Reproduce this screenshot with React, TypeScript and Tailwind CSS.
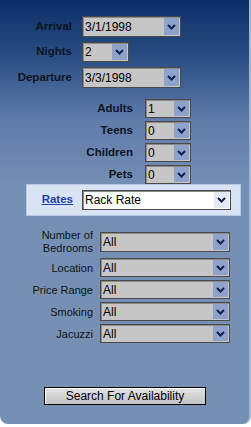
const Chevron = () => (
  <svg width="9" height="6" viewBox="0 0 9 6">
    <path d="M1 1 L4.5 4.5 L8 1" fill="none" stroke="#0f2250" strokeWidth="2" />
  </svg>
)

type DropProps = { value: string; w: string; h?: string; white?: boolean }

const Drop = ({ value, w, h = "h-[19px]", white }: DropProps) => {
  return (
    <div
      className={`${w} ${h} flex items-stretch border border-[#4a4a4a] shadow-[inset_1px_1px_0_#8a8a8a] ${
        white ? "bg-white" : "bg-[#c6c6c6]"
      }`}
    >
      <span className="flex-1 flex items-center pl-[2px] text-[12px] leading-none text-black">{value}</span>
      <span
        className={`w-[15px] m-[1px] flex items-center justify-center ${
          white ? "bg-[#e4e9f4]" : "bg-[#8ea2cb]"
        }`}
      >
        <Chevron />
      </span>
    </div>
  )
}

const TopRow = ({ label, children }: { label: string; children: React.ReactNode }) => (
  <div className="flex items-center">
    <span className="w-[72px] text-right font-bold text-[11.5px] text-[#0d1422]">{label}</span>
    <div className="ml-[10px]">{children}</div>
  </div>
)

const MidRow = ({ label, value }: { label: string; value: string }) => (
  <div className="flex items-center">
    <span className="w-[133px] text-right font-bold text-[11.5px] text-[#0d1422]">{label}</span>
    <div className="ml-[12px]">
      <Drop value={value} w="w-[46px]" />
    </div>
  </div>
)

const LowRow = ({ label }: { label: string }) => (
  <div className="flex items-center">
    <span className="w-[93px] text-right text-[11px] leading-[14px] text-[#111]">{label}</span>
    <div className="ml-[7px]">
      <Drop value="All" w="w-[130px]" />
    </div>
  </div>
)

export default function App() {
  return (
    <div className="w-[251px] h-[427px] bg-white font-['Liberation_Sans',Arial,sans-serif]">
      <div className="w-[251px] h-[424px] rounded-b-[8px] border-r-2 border-[#a3b5d0] bg-[linear-gradient(to_bottom,#0a2e66_0px,#2c4f85_60px,#5f7caa_120px,#7590b5_190px,#7690b4_100%)] flex flex-col">
        <div className="mt-[16px] flex flex-col gap-[5px]">
          <TopRow label="Arrival">
            <Drop value="3/1/1998" w="w-[99px]" h="h-[21px]" />
          </TopRow>
          <TopRow label="Nights">
            <Drop value="2" w="w-[47px]" h="h-[20px]" />
          </TopRow>
          <TopRow label="Departure">
            <Drop value="3/3/1998" w="w-[99px]" h="h-[21px]" />
          </TopRow>
        </div>

        <div className="mt-[11px] flex flex-col gap-[3px]">
          <MidRow label="Adults" value="1" />
          <MidRow label="Teens" value="0" />
          <MidRow label="Children" value="0" />
          <MidRow label="Pets" value="0" />
        </div>

        <div className="ml-[26px] w-[215px] h-[32px] bg-[#d8e3f4] border border-[#b7c8e4] flex items-center">
          <span className="w-[46px] text-right font-bold text-[11.5px] text-[#1f3fa8] underline">Rates</span>
          <div className="ml-[9px]">
            <Drop value="Rack Rate" w="w-[149px]" h="h-[20px]" white />
          </div>
        </div>

        <div className="mt-[13px] flex flex-col gap-[3px]">
          <div className="flex items-center">
            <span className="w-[93px] text-right text-[11px] leading-[13px] text-[#111]">
              Number of
              <br />
              Bedrooms
            </span>
            <div className="ml-[7px]">
              <Drop value="All" w="w-[130px]" h="h-[20px]" />
            </div>
          </div>
          <LowRow label="Location" />
          <LowRow label="Price Range" />
          <LowRow label="Smoking" />
          <LowRow label="Jacuzzi" />
        </div>

        <div className="mt-[40px] ml-[44px]">
          <button className="w-[162px] h-[18px] border border-black bg-[linear-gradient(to_bottom,#e2e2e2,#c4c4c4)] shadow-[inset_1px_1px_0_#fff] text-[12px] leading-none text-black">
            Search For Availability
          </button>
        </div>
      </div>
    </div>
  )
}
